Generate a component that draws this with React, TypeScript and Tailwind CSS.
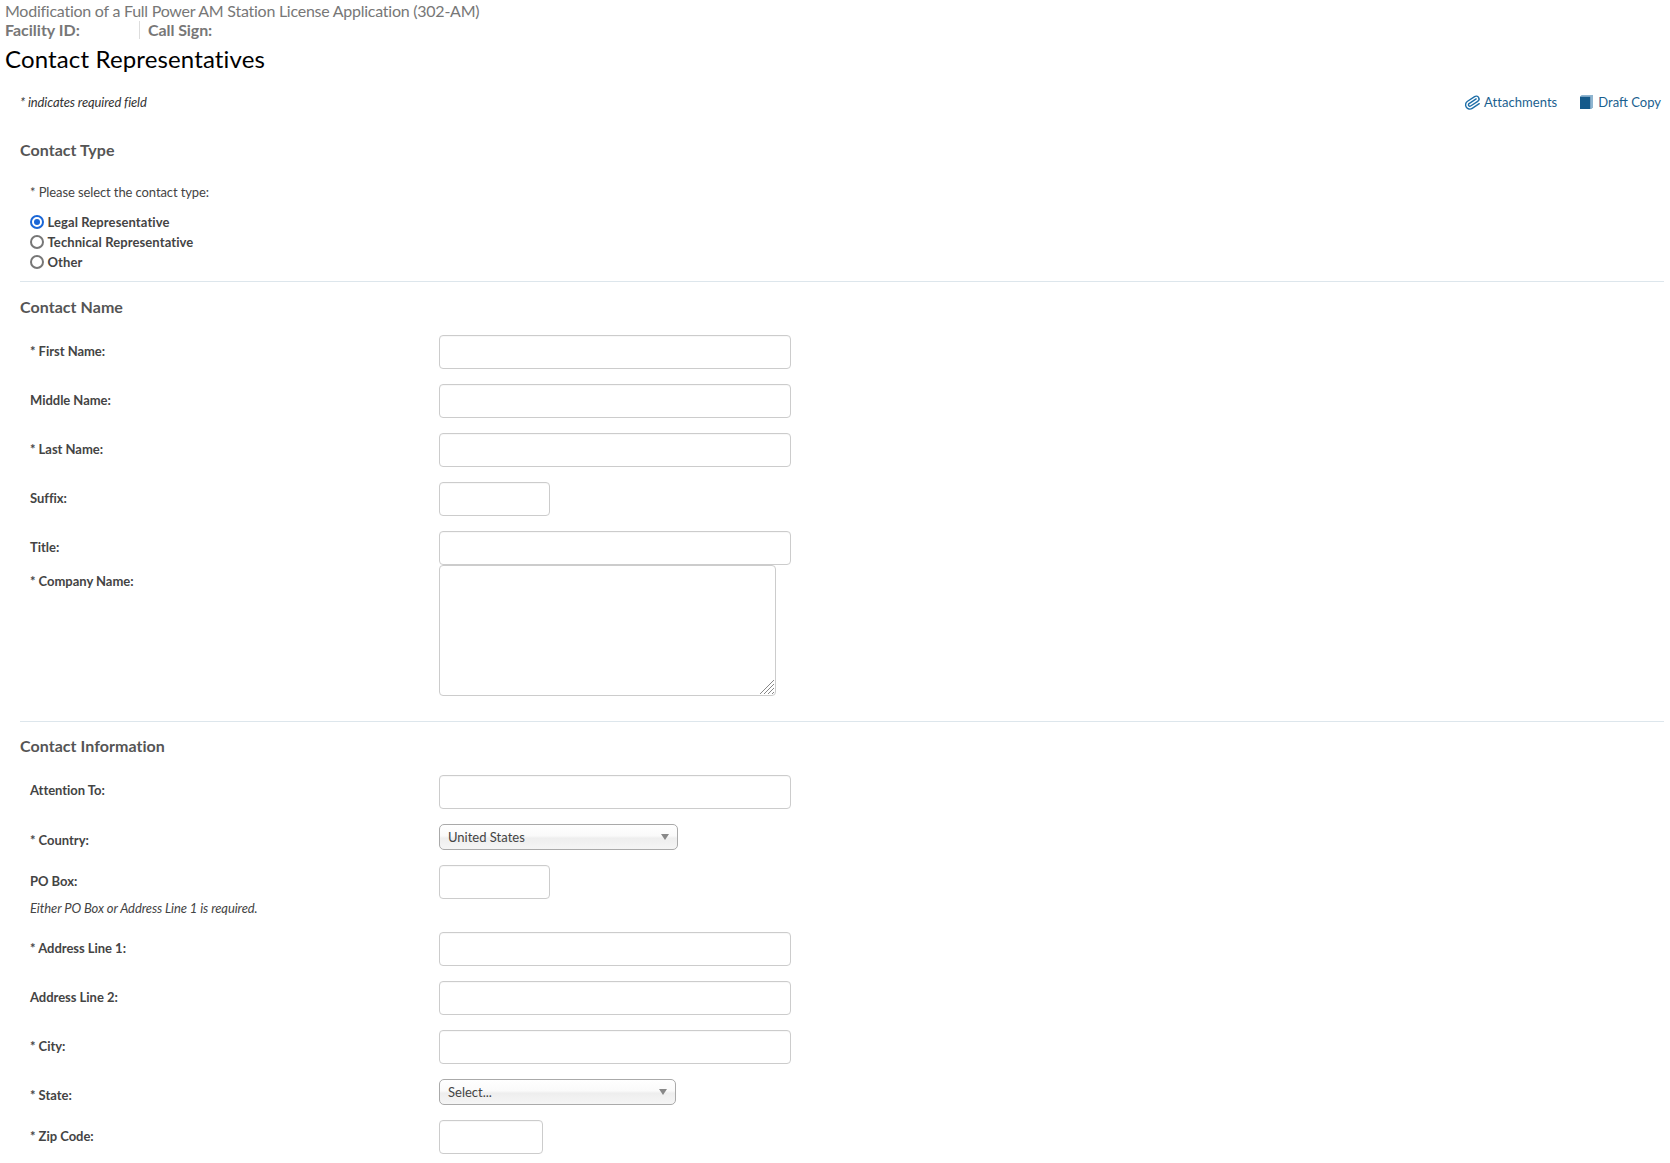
import type { ReactNode } from 'react';
import { Paperclip } from 'lucide-react';

function Row({
  label,
  className,
  labelClass = 'pt-[6px]',
  children,
}: {
  label: string;
  className: string;
  labelClass?: string;
  children: ReactNode;
}) {
  return (
    <div className={`flex ${className}`}>
      <label className={`w-[419px] shrink-0 pl-[10px] text-[13px] leading-[20px] font-bold tracking-[-0.03px] text-[#444] ${labelClass}`}>{label}</label>
      {children}
    </div>
  );
}

function TextInput({ width = 'w-[352px]' }: { width?: string }) {
  return <input type="text" className={`${width} h-[34px] rounded-[4px] border border-[#ccc] bg-white shadow-[inset_0_1px_1px_rgba(0,0,0,0.03)]`} />;
}

function FakeSelect({ value, width }: { value: string; width: string }) {
  return (
    <div className={`${width} mb-auto flex h-[26px] items-center justify-between rounded-[5px] border border-[#aaa] bg-[linear-gradient(#fff_0%,#fafafa_45%,#eee_55%,#f5f5f5_100%)] pl-[8px] pr-[8px] text-[13px] text-[#444]`}>
      <span className="pt-[2px]">{value}</span>
      <span className="h-0 w-0 border-x-[4px] border-t-[6px] border-x-transparent border-t-[#888]" />
    </div>
  );
}

function Radio({ label, checked }: { label: string; checked?: boolean }) {
  return (
    <div className="flex h-[20px] items-center gap-[3.5px] text-[13px] font-bold tracking-[0.1px] text-[#444]">
      <span className={`-mt-[2px] flex h-[14px] w-[14px] items-center justify-center rounded-full border-2 ${checked ? 'border-[#1a66d6]' : 'border-[#777]'}`}>
        {checked && <span className="h-[6px] w-[6px] rounded-full bg-[#1a66d6]" />}
      </span>
      {label}
    </div>
  );
}

function SectionTitle({ children, className }: { children: ReactNode; className: string }) {
  return <h2 className={`text-[16px] leading-[22px] font-bold tracking-[0.05px] text-[#555] ${className}`}>{children}</h2>;
}

export default function App() {
  return (
    <div className="h-[1163px] overflow-hidden bg-white pl-[5px] font-['Lato','Open_Sans',sans-serif] text-[13px] text-[#444]">
      <div className="pt-[1px] text-[16px] leading-[19px] tracking-[-0.25px] text-[#777]">Modification of a Full Power AM Station License Application (302-AM)</div>
      <div className="flex h-[19px] items-center text-[16px] font-bold text-[#777]">
        <span className="w-[135px] border-r border-[#ddd] leading-[18px]">Facility ID:</span>
        <span className="pl-[8px] tracking-[-0.08px]">Call Sign:</span>
      </div>
      <h1 className="mt-[1px] text-[24px] leading-[38px] tracking-[0.14px] text-black">Contact Representatives</h1>

      <div className="pl-[15px] pr-[6px]">
        <div className="mt-[14px] flex items-center justify-between pr-[3px]">
          <span className="text-[13px] leading-[20px] tracking-[-0.12px] text-[#333] italic">* indicates required field</span>
          <div className="flex items-center gap-[23px] text-[13px] leading-[20px] text-[#1b5f8f]">
            <a className="flex items-center gap-[3px] tracking-[0.05px]">
              <Paperclip className="h-[17px] w-[17px] rotate-[12deg] text-[#1f6fa8]" strokeWidth={2} />
              Attachments
            </a>
            <a className="flex items-center gap-[5px]">
              <svg viewBox="0 0 13 14" className="h-[14px] w-[13px]">
                <path d="M0 1.6 1.6 0H13v12.2L11.6 14H0z" fill="#8fb5d0" />
                <path d="M0 1.8h10.2V14H0z" fill="#155a8a" />
              </svg>
              Draft Copy
            </a>
          </div>
        </div>

        <SectionTitle className="mt-[27px]">Contact Type</SectionTitle>
        <p className="mt-[21px] pl-[10px] text-[13px] leading-[20px] tracking-[-0.1px] text-[#444]">* Please select the contact type:</p>
        <div className="mt-[11px] pl-[10px]">
          <Radio label="Legal Representative" checked />
          <Radio label="Technical Representative" />
          <Radio label="Other" />
        </div>

        <div className="mt-[8px] border-t border-[#dde6ec]" />
        <SectionTitle className="mt-[14px]">Contact Name</SectionTitle>
        <div className="mt-[17px]">
          <Row label="* First Name:" className="mb-[15px]"><TextInput /></Row>
          <Row label="Middle Name:" className="mb-[15px]"><TextInput /></Row>
          <Row label="* Last Name:" className="mb-[15px]"><TextInput /></Row>
          <Row label="Suffix:" className="mb-[15px]"><TextInput width="w-[111px]" /></Row>
          <Row label="Title:" className=""><TextInput /></Row>
          <Row label="* Company Name:" className="">
            <div className="relative h-[131px] w-[337px]">
              <textarea className="block h-full w-full resize-none rounded-[4px] border border-[#ccc] bg-white" />
              <svg viewBox="0 0 14 14" className="absolute right-[2px] bottom-[2px] h-[14px] w-[14px]" stroke="#888" strokeWidth="1">
                <path d="M0 14 14 0M4 14 14 4M8 14l6-6M12 14l2-2" />
              </svg>
            </div>
          </Row>
        </div>

        <div className="mt-[25px] border-t border-[#dde6ec]" />
        <SectionTitle className="mt-[13px]">Contact Information</SectionTitle>
        <div className="mt-[18px]">
          <Row label="Attention To:" className="mb-[15px]" labelClass="pt-[5px]"><TextInput /></Row>
          <Row label="* Country:" className="mb-[15px] h-[26px]"><FakeSelect value="United States" width="w-[239px]" /></Row>
          <Row label="PO Box:" className="h-[34px]"><TextInput width="w-[111px]" /></Row>
          <p className="h-[33px] pl-[10px] text-[13px] leading-[18px] tracking-[-0.1px] text-[#444] italic">Either PO Box or Address Line 1 is required.</p>
          <Row label="* Address Line 1:" className="mb-[15px]"><TextInput /></Row>
          <Row label="Address Line 2:" className="mb-[15px]"><TextInput /></Row>
          <Row label="* City:" className="mb-[15px]"><TextInput /></Row>
          <Row label="* State:" className="mb-[15px] h-[26px]"><FakeSelect value="Select..." width="w-[237px]" /></Row>
          <Row label="* Zip Code:" className=""><TextInput width="w-[104px]" /></Row>
        </div>
      </div>
    </div>
  );
}
